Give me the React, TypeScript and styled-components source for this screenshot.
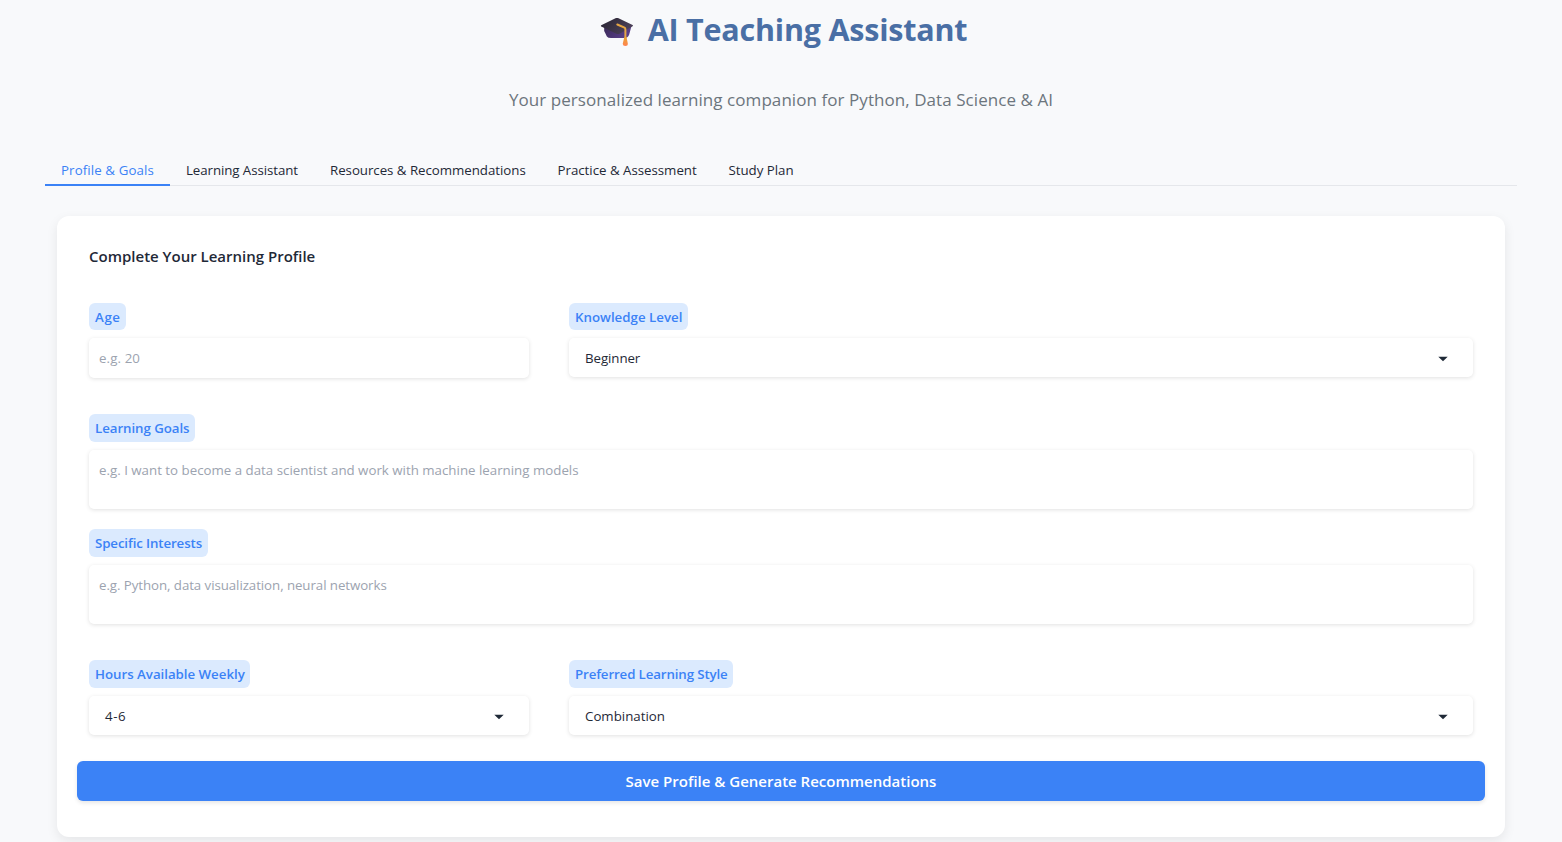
import React from "react";
import styled, { createGlobalStyle } from "styled-components";

const GlobalStyle = createGlobalStyle`
  * { box-sizing: border-box; }
  html, body { margin: 0; height: 842px; overflow: hidden; background: #f8f9fb; }
  body, input, textarea, button { font-family: "Open Sans", "Noto Sans", sans-serif; }
`;

const Page = styled.main`
  height: 842px;
  padding: 0 45px;
  display: flex;
  flex-direction: column;
  background: #f8f9fb;
  color: #1f2937;
  overflow: hidden;
`;

const Title = styled.h1`
  margin: 7px 0 0;
  height: 45px;
  padding: 0 0 2px 5px;
  display: flex;
  align-items: center;
  justify-content: center;
  gap: 14px;
  color: #4a6fa5;
  font-size: 30.5px;
  line-height: 45px;
  font-weight: 700;
  white-space: nowrap;

  > span { padding-top: 2px; }
`;

const Subtitle = styled.p`
  margin: 34px 0 0;
  height: 28px;
  line-height: 28px;
  text-align: center;
  color: #6c757d;
  font-size: 17px;
  white-space: nowrap;
`;

const Tabs = styled.nav`
  margin-top: 40px;
  height: 32px;
  flex: none;
  display: flex;
  border-bottom: 1px solid #e5e7eb;
`;

const Tab = styled.a<{ $width: number; $active?: boolean }>`
  width: ${(p) => p.$width}px;
  height: 32px;
  padding-left: 16px;
  line-height: 32px;
  font-size: 13.3px;
  white-space: nowrap;
  color: ${(p) => (p.$active ? "#3b82f6" : "#1f2937")};
  border-bottom: ${(p) => (p.$active ? "2px solid #3b82f6" : "0")};
`;

const Card = styled.form`
  margin: 30px 12px 0;
  height: 621px;
  flex: none;
  padding: 28px 20px 0;
  display: flex;
  flex-direction: column;
  background: #fff;
  border-radius: 12px;
  box-shadow: 0 4px 12px rgba(0, 0, 0, 0.08);
`;

const Heading = styled.h3`
  margin: 0 12px 35px;
  height: 24px;
  line-height: 24px;
  font-size: 15px;
  font-weight: 600;
`;

const Row = styled.div<{ $gap: number }>`
  display: grid;
  grid-template-columns: 440px 1fr;
  column-gap: 40px;
  align-items: start;
  margin: 0 12px ${(p) => p.$gap}px;
`;

const Field = styled.div<{ $gap?: number }>`
  display: flex;
  flex-direction: column;
  align-items: flex-start;
  margin: 0 ${(p) => (p.$gap === undefined ? 0 : 12)}px ${(p) => p.$gap ?? 0}px;
`;

const Label = styled.label<{ $width: number; $height?: number }>`
  width: ${(p) => p.$width}px;
  height: ${(p) => p.$height ?? 28}px;
  margin-bottom: 8px;
  padding-left: 6px;
  line-height: 28px;
  border-radius: 6px;
  background: #dbeafe;
  color: #3b82f6;
  font-size: 13.3px;
  font-weight: 600;
  white-space: nowrap;
`;

const Control = styled.div<{ $height: number; $inset: number; $muted?: boolean }>`
  width: 100%;
  height: ${(p) => p.$height}px;
  padding: 10px ${(p) => p.$inset}px;
  display: flex;
  justify-content: space-between;
  align-items: flex-start;
  line-height: 21px;
  font-size: 13.3px;
  border-radius: 5px;
  background: #fff;
  color: ${(p) => (p.$muted ? "#9ca3af" : "#1f2937")};
  box-shadow: 0 1px 4px rgba(0, 0, 0, 0.12);
`;

const Arrow = styled.svg`
  width: 10px;
  height: 6px;
  margin: 8px 9px 0 0;
`;

const SaveButton = styled.button`
  height: 40px;
  padding: 0;
  border: 0;
  border-radius: 6px;
  background: #3b82f6;
  color: #fff;
  font-size: 15px;
  font-weight: 600;
  line-height: 40px;
  box-shadow: 0 2px 4px rgba(0, 0, 0, 0.1);
`;

const Text = styled.span<{ $spacing?: number }>`
  letter-spacing: ${(p) => p.$spacing ?? 0}px;
`;

const CapIcon = styled.svg`
  width: 34px;
  height: 34px;
  flex: none;
`;

function GraduationCap() {
  return (
    <CapIcon viewBox="0 0 34 34" aria-hidden="true">
      <defs>
        <linearGradient id="board" x1="0" y1="0" x2="1" y2="0.5">
          <stop offset="0" stopColor="#282431" />
          <stop offset="1" stopColor="#4b4058" />
        </linearGradient>
        <linearGradient id="base" x1="0" y1="0" x2="1" y2="0.4">
          <stop offset="0" stopColor="#3a2a58" />
          <stop offset="1" stopColor="#5a3f8a" />
        </linearGradient>
        <linearGradient id="tassel" x1="0" y1="0" x2="0" y2="1">
          <stop offset="0" stopColor="#e9a52f" />
          <stop offset="1" stopColor="#ff8352" />
        </linearGradient>
      </defs>
      <path d="M4.200 14v5l2.700 5.500Q8 26 11 26h14q3-.3 4.200-3.500L31.500 14z" fill="url(#base)" />
      <path d="M1.200 13.200 16 6.100q1-.400 2 0l14.600 6.800q.9.600 0 1.300L19.500 21.700q-1.500.8-3 0L1.200 14.500q-.8-.6 0-1.300z" fill="url(#board)" />
      <path d="M17.300 12.500 24.500 15.700q.9.500.9 1.500v9" fill="none" stroke="#e6a644" strokeWidth="2" strokeLinecap="round" />
      <path d="M24.200 25.500q1.200-1 2.400 0l1.200 6q.2 2.500-2.400 2.500T22.800 31.500z" fill="url(#tassel)" />
    </CapIcon>
  );
}

function Select({ value, spacing }: { value: string; spacing?: number }) {
  return (
    <Control $height={39} $inset={16} role="combobox">
      <Text $spacing={spacing}>{value}</Text>
      <Arrow viewBox="0 0 10 6">
        <path d="M.3.700h9.400L5 5.200z" fill="#1f2937" />
      </Arrow>
    </Control>
  );
}

const tabs = [
  { name: "Profile & Goals", width: 125, spacing: 0.1 },
  { name: "Learning Assistant", width: 144, spacing: -0.08 },
  { name: "Resources & Recommendations", width: 227.5, spacing: -0.04 },
  { name: "Practice & Assessment", width: 171, spacing: -0.02 },
  { name: "Study Plan", width: 97, spacing: -0.03 },
];

export default function App() {
  return (
    <>
      <GlobalStyle />
      <Page>
        <Title>
          <GraduationCap />
          <Text $spacing={-0.22}>AI Teaching Assistant</Text>
        </Title>
        <Subtitle>
          <Text $spacing={0.06}>Your personalized learning companion for Python, Data Science &amp; AI</Text>
        </Subtitle>
        <Tabs>
          {tabs.map((tab, i) => (
            <Tab key={tab.name} $width={tab.width} $active={i === 0}>
              <Text $spacing={tab.spacing}>{tab.name}</Text>
            </Tab>
          ))}
        </Tabs>
        <Card>
          <Heading>
            <Text>Complete Your Learning Profile</Text>
          </Heading>
          <Row $gap={36}>
            <Field>
              <Label $width={37} $height={27}><Text $spacing={0.6}>Age</Text></Label>
              <Control $height={40} $inset={10} $muted><Text $spacing={0.1}>e.g. 20</Text></Control>
            </Field>
            <Field>
              <Label $width={119} $height={27}><Text>Knowledge Level</Text></Label>
              <Select value="Beginner" spacing={-0.08} />
            </Field>
          </Row>
          <Field $gap={20}>
            <Label $width={106}><Text $spacing={-0.07}>Learning Goals</Text></Label>
            <Control $height={59} $inset={10} $muted>
              <Text>e.g. I want to become a data scientist and work with machine learning models</Text>
            </Control>
          </Field>
          <Field $gap={36}>
            <Label $width={119}><Text $spacing={-0.12}>Specific Interests</Text></Label>
            <Control $height={59} $inset={10} $muted>
              <Text $spacing={-0.07}>e.g. Python, data visualization, neural networks</Text>
            </Control>
          </Field>
          <Row $gap={26}>
            <Field>
              <Label $width={161}><Text $spacing={-0.03}>Hours Available Weekly</Text></Label>
              <Select value="4-6" spacing={0.6} />
            </Field>
            <Field>
              <Label $width={164}><Text $spacing={-0.13}>Preferred Learning Style</Text></Label>
              <Select value="Combination" />
            </Field>
          </Row>
          <SaveButton type="button">
            <Text>Save Profile &amp; Generate Recommendations</Text>
          </SaveButton>
        </Card>
      </Page>
    </>
  );
}
